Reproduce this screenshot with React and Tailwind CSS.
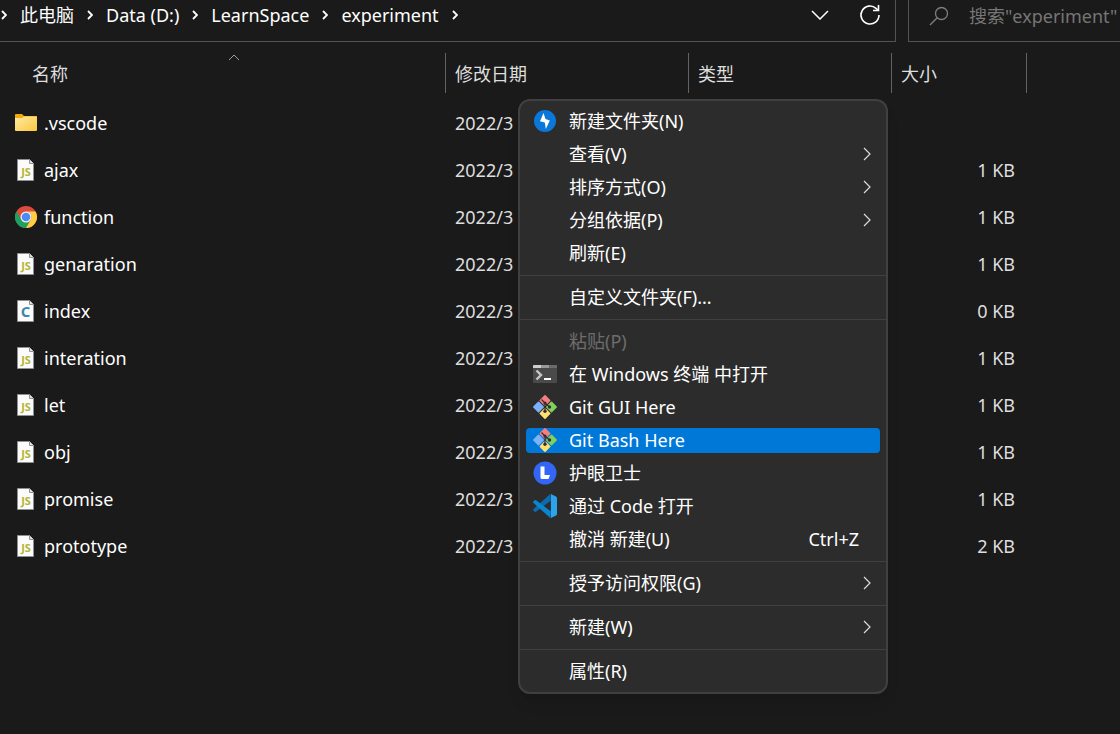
import React from 'react';

const crumbs = ['此电脑', 'Data (D:)', 'LearnSpace', 'experiment'];

const files = [
  { name: '.vscode', icon: 'folder', date: '2022/3', size: '' },
  { name: 'ajax', icon: 'js', date: '2022/3', size: '1 KB' },
  { name: 'function', icon: 'chrome', date: '2022/3', size: '1 KB' },
  { name: 'genaration', icon: 'js', date: '2022/3', size: '1 KB' },
  { name: 'index', icon: 'c', date: '2022/3', size: '0 KB' },
  { name: 'interation', icon: 'js', date: '2022/3', size: '1 KB' },
  { name: 'let', icon: 'js', date: '2022/3', size: '1 KB' },
  { name: 'obj', icon: 'js', date: '2022/3', size: '1 KB' },
  { name: 'promise', icon: 'js', date: '2022/3', size: '1 KB' },
  { name: 'prototype', icon: 'js', date: '2022/3', size: '2 KB' },
];

const menuGroups = [
  [
    { label: '新建文件夹(N)', icon: 'flash' },
    { label: '查看(V)', sub: true },
    { label: '排序方式(O)', sub: true },
    { label: '分组依据(P)', sub: true },
    { label: '刷新(E)' },
  ],
  [{ label: '自定义文件夹(F)...' }],
  [
    { label: '粘贴(P)', disabled: true },
    { label: '在 Windows 终端 中打开', icon: 'terminal' },
    { label: 'Git GUI Here', icon: 'git' },
    { label: 'Git Bash Here', icon: 'git', active: true },
    { label: '护眼卫士', icon: 'guard' },
    { label: '通过 Code 打开', icon: 'code' },
    { label: '撤消 新建(U)', shortcut: 'Ctrl+Z' },
  ],
  [{ label: '授予访问权限(G)', sub: true }],
  [{ label: '新建(W)', sub: true }],
  [{ label: '属性(R)' }],
];

function FolderIcon() {
  return (
    <svg viewBox="0 0 24 24" className="w-6 h-6">
      <defs>
        <linearGradient id="folder" x1="0" y1="0" x2="1" y2="1">
          <stop offset="0" stopColor="#ffe9a6" />
          <stop offset="1" stopColor="#fcc83c" />
        </linearGradient>
      </defs>
      <path d="M1 4A1 1 0 0 1 2 3h6l2 2h12a1 1 0 0 1 1 1V12H1z" fill="#f5a90c" />
      <path d="M1 7h7l2-1.500h13V19a1 1 0 0 1-1 1H2a1 1 0 0 1-1-1z" fill="url(#folder)" />
    </svg>
  );
}

function PageIcon({ text, color, size, x }) {
  return (
    <svg viewBox="0 0 24 24" className="w-6 h-6">
      <path d="M3.500 1.500h12l4 4v17h-16z" fill="#fbfbfb" stroke="#8d9193" />
      <path d="M15.500 1.500v4h4" fill="#e4e4e4" stroke="#8d9193" />
      <text x={x} y="18" textAnchor="middle" fontSize={size} fontWeight="700" fontFamily="Open Sans, sans-serif" fill={color}>
        {text}
      </text>
    </svg>
  );
}

function ChromeIcon() {
  return (
    <svg viewBox="0 0 24 24" className="w-6 h-6">
      <circle cx="12" cy="12" r="11" fill="#dd4b3e" />
      <path d="M2.470 6.500A11 11 0 0 0 12 23l4.760-8.250A5.500 5.500 0 0 1 7.240 14.750z" fill="#1aa260" />
      <path d="M12 6.500h9.530A11 11 0 0 1 12 23l4.760-8.250A5.500 5.500 0 0 0 12 6.500z" fill="#ffcd40" />
      <circle cx="12" cy="12" r="5.500" fill="#f1f1f1" />
      <circle cx="12" cy="12" r="4.300" fill="#4c8bf5" />
    </svg>
  );
}

function FlashIcon() {
  return (
    <svg viewBox="0 0 24 24" className="w-6 h-6">
      <circle cx="12" cy="12" r="11" fill="#0a78d8" />
      <path d="M10.500 4 7 12.300l4.800 1.200 1 6.500 4-8.500-4.300-1.500z" fill="#fff" />
    </svg>
  );
}

function TerminalIcon() {
  return (
    <svg viewBox="0 0 24 24" className="w-6 h-6">
      <path d="M0 3h24v17a1 1 0 0 1-1 1H1a1 1 0 0 1-1-1z" fill="#4a4a4a" />
      <path d="M0 4a1 1 0 0 1 1-1h7v3H0z" fill="#cfcfcf" />
      <path d="M8 3h8v3H8z" fill="#999" />
      <path d="M16 3h7a1 1 0 0 1 1 1v2h-8z" fill="#6b6b6b" />
      <path d="M3.500 8.500 8 13l-4.500 4.500" fill="none" stroke="#c8c8c8" strokeWidth="2.400" />
      <path d="M11 16h7v2h-7z" fill="#fff" />
    </svg>
  );
}

function GitIcon() {
  return (
    <svg viewBox="0 0 24 24" className="w-6 h-6">
      <g transform="rotate(45 12 12)">
        <rect x="3.300" y="3.300" width="8.200" height="8.200" rx="0.800" fill="#f37f80" />
        <rect x="12.500" y="3.300" width="8.200" height="8.200" rx="0.800" fill="#80d05c" />
        <rect x="3.300" y="12.500" width="8.200" height="8.200" rx="0.800" fill="#7db1fa" />
        <rect x="12.500" y="12.500" width="8.200" height="8.200" rx="0.800" fill="#ffe173" />
      </g>
      <path d="M8.500 4.500 12 8v8M12 8l4.500 4" fill="none" stroke="#3a2c2c" strokeWidth="1.200" />
      <circle cx="12" cy="8" r="1.600" fill="#3a2c2c" />
      <circle cx="12" cy="16.200" r="1.700" fill="#3a2c2c" />
      <circle cx="16.500" cy="12" r="1.700" fill="#3a2c2c" />
    </svg>
  );
}

function GuardIcon() {
  return (
    <svg viewBox="0 0 24 24" className="w-6 h-6">
      <circle cx="12" cy="12" r="11.500" fill="#3366f6" />
      <path d="M7.500 5.500h4V14H17l-1.500 4H9a1.500 1.500 0 0 1-1.500-1.500z" fill="#fff" />
    </svg>
  );
}

function CodeIcon() {
  return (
    <svg viewBox="0 0 24 24" className="w-6 h-6">
      <path d="M0.300 15.300 17 0.200Q18 5 17.700 6.800L3 17.700q-.7.400-1.300 0l-1.400-1.300q-.6-.5 0-1.100z" fill="#0a6bb0" />
      <path d="M0.300 8.700 17 23.800q1-4.800.700-6.600L3 6.300q-.7-.4-1.300 0L.300 7.600q-.6.500 0 1.100z" fill="#0a86d0" />
      <path d="M17 0.200q.7-.4 1.400 0L23 2.500q1 .5 1 1.500v16q0 1-1 1.500l-4.600 2.300q-.7.400-1.400 0 .9.100.9-1.200V1.400q0-1.300-.9-1.200z" fill="#2ba4ee" />
    </svg>
  );
}

function Icon({ name }) {
  switch (name) {
    case 'folder':
      return <FolderIcon />;
    case 'js':
      return <PageIcon text="JS" color="#b5b433" size="11" x="12" />;
    case 'c':
      return <PageIcon text="C" color="#3d87ab" size="15" x="11.500" />;
    case 'chrome':
      return <ChromeIcon />;
    case 'flash':
      return <FlashIcon />;
    case 'terminal':
      return <TerminalIcon />;
    case 'git':
      return <GitIcon />;
    case 'guard':
      return <GuardIcon />;
    case 'code':
      return <CodeIcon />;
    default:
      return null;
  }
}

function CrumbArrow() {
  return (
    <svg viewBox="0 0 6 10" className="w-[6px] h-[10px] shrink-0" fill="none" stroke="#fff" strokeWidth="1.800">
      <path d="M1 1l4 4-4 4" />
    </svg>
  );
}

function TopBar() {
  return (
    <header className="flex h-[42px] gap-3 leading-6">
      <div className="flex flex-1 justify-between border-r border-b border-[#535353] pb-3">
        <nav className="flex items-center pl-px" aria-label="路径">
          <CrumbArrow />
          {crumbs.map((crumb) => (
            <span key={crumb} className="flex items-center">
              <a href="#" className="px-[13px]">{crumb}</a>
              <CrumbArrow />
            </span>
          ))}
        </nav>
        <div className="flex items-center gap-[30px] pr-[14px]">
          <button type="button" aria-label="展开">
            <svg viewBox="0 0 18 10" className="w-[18px] h-[10px]" fill="none" stroke="#fff" strokeWidth="1.500">
              <path d="M1 1l8 8 8-8" />
            </svg>
          </button>
          <button type="button" aria-label="刷新">
            <svg viewBox="0 0 22 22" className="w-[22px] h-[22px]" fill="none" stroke="#fff" strokeWidth="1.600">
              <path d="M20 11a9 9 0 1 1-3-6.700L19 6.200" />
              <path d="M19.500 1v5.500H14" />
            </svg>
          </button>
        </div>
      </div>
      <label className="flex w-[212px] shrink-0 items-center gap-5 border-l border-b border-[#535353] pl-5 pb-[10px]">
        <svg viewBox="0 0 20 20" className="w-5 h-5 shrink-0" fill="none" stroke="#7d7d7d" strokeWidth="1.300">
          <circle cx="12.500" cy="7.500" r="6" />
          <path d="M8.200 11.800 1 19" />
        </svg>
        <input
          type="text"
          aria-label="搜索"
          placeholder={'搜索"experiment"'}
          className="w-full min-w-0 bg-transparent placeholder:text-[#767676] outline-none"
        />
      </label>
    </header>
  );
}

function HeadCell({ label, sorted }) {
  return (
    <th scope="col" className="p-0 pt-[11px] pb-[6px] font-normal text-left">
      <div className="relative flex h-10 items-center border-r border-[#636363] pl-[9px] pt-[2px] text-[#dedede]">
        {sorted && (
          <svg viewBox="0 0 12 7" className="absolute left-[228px] top-[1px] w-3 h-[7px]" fill="none" stroke="#a0a0a0">
            <path d="M1 6l5-5 5 5" />
          </svg>
        )}
        <span className={sorted ? 'pl-[23px]' : ''}>{label}</span>
      </div>
    </th>
  );
}

function FileTable() {
  return (
    <table className="w-full table-fixed">
      <colgroup>
        <col className="w-[446px]" />
        <col className="w-[243px]" />
        <col className="w-[203px]" />
        <col className="w-[135px]" />
        <col />
      </colgroup>
      <thead>
        <tr>
          <HeadCell label="名称" sorted />
          <HeadCell label="修改日期" />
          <HeadCell label="类型" />
          <HeadCell label="大小" />
          <td />
        </tr>
      </thead>
      <tbody>
        {files.map((file) => (
          <tr key={file.name} className="h-[47px]">
            <td className="p-0 pl-[14px]">
              <div className="flex items-center gap-[6px]">
                <Icon name={file.icon} />
                {file.name}
              </div>
            </td>
            <td className="p-0 pl-[9px] text-[#dedede]">{file.date}</td>
            <td />
            <td className="p-0 pr-3 text-right text-[#dedede]">{file.size}</td>
            <td />
          </tr>
        ))}
      </tbody>
    </table>
  );
}

function MenuItem({ item }) {
  return (
    <li className="px-[6px] py-1">
      <button
        type="button"
        disabled={item.disabled}
        className={`flex h-[25px] w-full items-center gap-3 rounded-[4px] pl-[7px] pr-[9px] pb-[2px] text-left ${
          item.active ? 'bg-[#0078d7]' : ''
        } ${item.disabled ? 'text-[#6d6d6d]' : 'text-white'}`}
      >
        <span className="w-6 h-6 shrink-0">
          <Icon name={item.icon} />
        </span>
        <span className="flex-1 whitespace-nowrap">{item.label}</span>
        {item.shortcut && <span className="pr-3">{item.shortcut}</span>}
        {item.sub && (
          <svg viewBox="0 0 8 14" className="w-2 h-[14px]" fill="none" stroke="#d8dce0" strokeWidth="1.200">
            <path d="M1 1l6 6-6 6" />
          </svg>
        )}
      </button>
    </li>
  );
}

function ContextMenu() {
  return (
    <div className="absolute left-[518px] top-[99px] w-[370px] rounded-[12px] border-2 border-[#404040] bg-[#2c2c2c] py-1 shadow-lg">
      {menuGroups.map((group, i) => (
        <div key={i}>
          {i > 0 && <hr className="my-[5px] border-t border-[#404040]" />}
          <ul>
            {group.map((item) => (
              <MenuItem key={item.label} item={item} />
            ))}
          </ul>
        </div>
      ))}
    </div>
  );
}

function App() {
  return (
    <div className="relative min-h-screen overflow-hidden bg-[#1a1a1a] font-['Noto_Sans','Noto_Sans_CJK_SC',sans-serif] text-[18px] leading-6 text-white">
      <TopBar />
      <main>
        <FileTable />
      </main>
      <ContextMenu />
    </div>
  );
}

export default App;
